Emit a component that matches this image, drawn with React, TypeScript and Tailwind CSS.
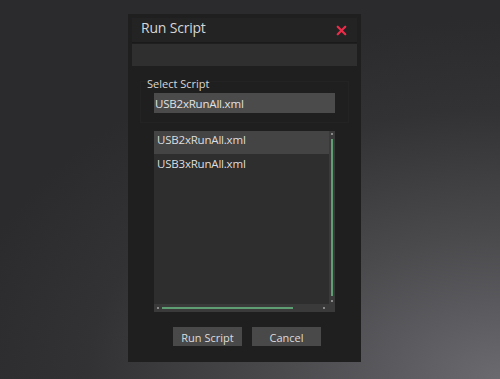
import { X } from "lucide-react";

const files = ["USB2xRunAll.xml", "USB3xRunAll.xml"];

export default function App() {
  return (
    <div
      className="w-[500px] h-[379px] overflow-hidden bg-[radial-gradient(ellipse_110%_95%_at_100%_100%,#6b6a6f_0%,#4a4a4d_40%,#323234_75%,#2b2b2d_100%)] pl-[128px] pt-[14px]"
      style={{ fontFamily: '"Open Sans", "Noto Sans", sans-serif' }}
    >
      <div className="w-[233px] h-[348px] bg-[#1f1f1f] p-[4px] flex flex-col">
        {/* title */}
        <div className="h-[25px] bg-[#232323] flex items-center justify-between pl-[9px] pr-[8px] border-b border-[#1a1a1a]">
          <span className="text-[14px] text-[#d6d6d6] leading-none -mt-[4px] tracking-[-0.2px]">Run Script</span>
          <X className="w-[15px] h-[15px] text-[#ec2d4a]" strokeWidth={3.5} />
        </div>
        <div className="h-[22px] mt-[1px] bg-[#2f2f2f]" />

        {/* select group */}
        <div className="mx-[8px] mt-[15px] h-[42px] border border-[#232323] pl-[6px]">
          <div className="text-[11px] text-[#d8d8d8] leading-none -mt-[4px]">Select Script</div>
          <div className="ml-[7px] mt-[4px] w-[181px] h-[20px] bg-[#4b4b4b] flex items-center pl-[1px] pt-[2px] text-[11.5px] tracking-[-0.2px] text-[#e2e2e2]">
            USB2xRunAll.xml
          </div>
        </div>

        {/* list */}
        <div className="ml-[22px] mt-[8px] w-[181px] h-[181px] bg-[#3a3a3a] flex flex-col">
          <div className="flex flex-1">
            <div className="w-[175px] bg-[#2e2e2e] flex flex-col">
              {files.map((f, i) => (
                <div
                  key={f}
                  className={`h-[23px] pl-[3px] pt-[1px] text-[11.5px] tracking-[-0.2px] text-[#dedede] leading-[16px] ${
                    i === 0 ? "bg-[#444444]" : "pt-[2px]"
                  }`}
                >
                  {f}
                </div>
              ))}
            </div>
            <div className="w-[6px] flex flex-col items-center pt-[2px] pb-[2px]">
              <div className="w-[2px] h-[2px] bg-[#8a8a8a]" />
              <div className="w-[2px] flex-1 bg-[#5f9d73] my-[4px]" />
              <div className="w-[2px] h-[2px] bg-[#8a8a8a]" />
            </div>
          </div>
          <div className="h-[8px] flex items-center pl-[3px] pr-[10px]">
            <div className="w-[2px] h-[2px] bg-[#8a8a8a]" />
            <div className="h-[2px] w-[131px] bg-[#5f9d73] ml-[3px]" />
            <div className="flex-1" />
            <div className="w-[2px] h-[2px] bg-[#8a8a8a]" />
          </div>
        </div>

        {/* buttons */}
        <div className="flex gap-[10px] ml-[41px] mt-[15px]">
          <button className="w-[69px] h-[19px] bg-[#494949] text-[11px] text-[#dcdcdc] leading-none pt-[1px]">
            Run Script
          </button>
          <button className="w-[69px] h-[19px] bg-[#494949] text-[11px] text-[#dcdcdc] leading-none pt-[1px]">
            Cancel
          </button>
        </div>
      </div>
    </div>
  );
}
